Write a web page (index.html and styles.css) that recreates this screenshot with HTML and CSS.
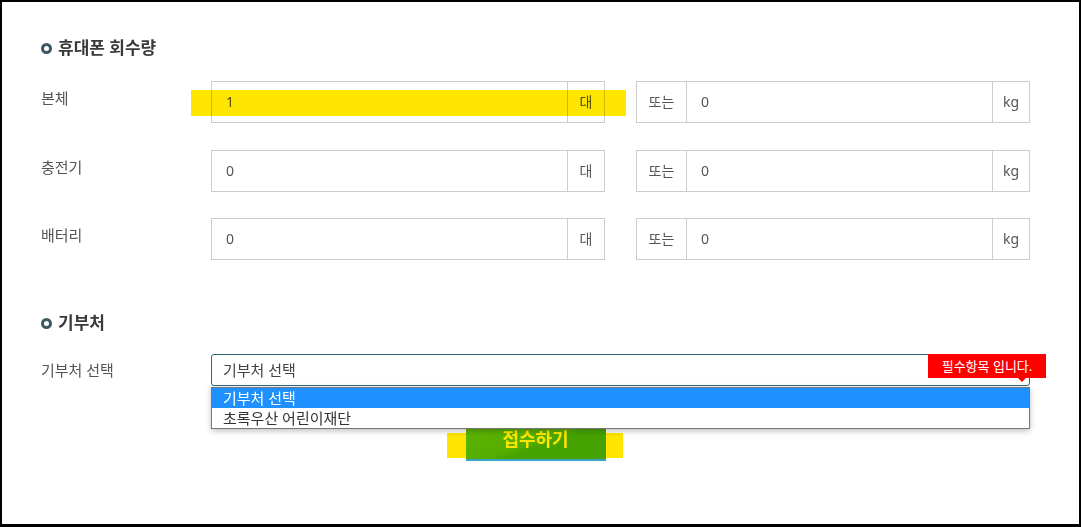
FILE: index.html
```html
<!DOCTYPE html>
<html lang="ko">
<head>
<meta charset="utf-8">
<title>휴대폰 회수 신청</title>
<link rel="stylesheet" href="styles.css">
</head>
<body>
<div class="page">
  <section class="sec">
    <h2 class="sec-title"><span class="ring"></span>휴대폰 회수량</h2>
    <div class="rows">
      <div class="row">
        <div class="label">본체</div>
        <div class="group">
          <div class="field">1</div>
          <div class="addon">대</div>
        </div>
        <div class="group">
          <div class="addon wide">또는</div>
          <div class="field">0</div>
          <div class="addon">kg</div>
        </div>
        <span class="mark mark-row"></span>
      </div>
      <div class="row">
        <div class="label">충전기</div>
        <div class="group">
          <div class="field">0</div>
          <div class="addon">대</div>
        </div>
        <div class="group">
          <div class="addon wide">또는</div>
          <div class="field">0</div>
          <div class="addon">kg</div>
        </div>
      </div>
      <div class="row">
        <div class="label">배터리</div>
        <div class="group">
          <div class="field">0</div>
          <div class="addon">대</div>
        </div>
        <div class="group">
          <div class="addon wide">또는</div>
          <div class="field">0</div>
          <div class="addon">kg</div>
        </div>
      </div>
    </div>
  </section>

  <section class="sec sec2">
    <h2 class="sec-title"><span class="ring"></span>기부처</h2>
    <div class="row select-row">
      <div class="label">기부처 선택</div>
      <div class="select-wrap">
        <div class="select">기부처 선택</div>
        <div class="tooltip">필수항목 입니다.<span class="tip-arrow"></span></div>
        <ul class="options">
          <li class="opt active">기부처 선택</li>
          <li class="opt">초록우산 어린이재단</li>
        </ul>
      </div>
    </div>
    <div class="actions">
      <div class="btn-wrap">
        <span class="mark mark-btn"></span>
        <button class="submit" type="button">접수하기</button>
      </div>
    </div>
  </section>
</div>
</body>
</html>
```

FILE: styles.css
```css
* { box-sizing: border-box; }
html, body { margin: 0; padding: 0; background: #fff; }
body {
  font-family: "Noto Sans", "Noto Sans CJK KR", sans-serif;
  color: #555;
  font-size: 14px;
}
.page {
  width: 1081px;
  height: 527px;
  border: 2px solid #000;
  border-bottom-width: 3px;
  padding: 35px 0 0 39px;
  overflow: hidden;
}
.sec-title {
  margin: 0;
  height: 22px;
  line-height: 22px;
  font-size: 17px;
  font-weight: 700;
  color: #3a3a3a;
  display: flex;
  align-items: center;
  gap: 6px;
}
.ring {
  width: 11px;
  height: 11px;
  border-radius: 50%;
  border: 3px solid #3d5664;
  display: inline-block;
}
.rows {
  margin-top: 22px;
  display: flex;
  flex-direction: column;
  gap: 26.5px;
}
.row {
  position: relative;
  display: flex;
  align-items: flex-start;
  height: 42px;
}
.label {
  width: 170px;
  padding-top: 7px;
  line-height: 20px;
  font-size: 15px;
  color: #555;
  flex: none;
}
.group {
  width: 394px;
  height: 42px;
  display: flex;
  border: 1px solid #ccc;
  flex: none;
}
.group + .group { margin-left: 31px; }
.field {
  flex: 1;
  padding-left: 14px;
  line-height: 40px;
  font-size: 14px;
  color: #555;
}
.addon {
  width: 37px;
  flex: none;
  text-align: center;
  line-height: 40px;
  font-size: 14px;
  color: #555;
  border-left: 1px solid #ccc;
}
.addon.wide {
  width: 50px;
  border-left: none;
  border-right: 1px solid #ccc;
}
.mark {
  position: absolute;
  background: #ffe600;
}
.mark-row {
  left: 150px;
  top: 9px;
  width: 435px;
  height: 26px;
  mix-blend-mode: multiply;
}
.sec2 { margin-top: 52px; }
.select-row {
  margin-top: 20px;
  height: 32px;
}
.select-row .label { padding-top: 6px; }
.select-wrap {
  position: relative;
  width: 819px;
  height: 32px;
}
.select {
  height: 32px;
  border: 1px solid #2f6676;
  border-radius: 3px;
  padding-left: 11px;
  line-height: 30px;
  font-size: 15px;
  color: #444;
}
.tooltip {
  position: absolute;
  left: 717px;
  top: 0;
  width: 118px;
  height: 24px;
  background: #ff0000;
  color: #fff;
  font-size: 13px;
  line-height: 24px;
  text-align: center;
  z-index: 3;
}
.tip-arrow {
  position: absolute;
  right: 20px;
  bottom: -4px;
  border-left: 4px solid transparent;
  border-right: 4px solid transparent;
  border-top: 4px solid #ff0000;
}
.options {
  position: absolute;
  left: 0;
  top: 33px;
  width: 819px;
  margin: 0;
  padding: 0;
  list-style: none;
  border: 1px solid #767676;
  background: #fff;
  box-shadow: 0 2px 6px rgba(0,0,0,0.25);
  z-index: 2;
}
.opt {
  height: 20px;
  line-height: 20px;
  padding-left: 11px;
  font-size: 15px;
  color: #333;
}
.opt.active {
  background: #1e90ff;
  color: #fff;
}
.actions {
  margin-top: 42px;
  width: 989px;
  display: flex;
  justify-content: center;
}
.btn-wrap {
  position: relative;
  width: 140px;
  height: 33px;
}
.mark-btn {
  left: -19px;
  top: 5px;
  width: 176px;
  height: 25px;
  z-index: 0;
}
.submit {
  position: relative;
  z-index: 1;
  display: block;
  width: 140px;
  height: 33px;
  margin: 0;
  padding: 0 0 10px;
  border: none;
  border-top: 1px solid #3a8a98;
  border-bottom: 2px solid #3aa5c4;
  background: linear-gradient(160deg, #5cb300 0%, #55ad00 45%, #46a200 55%, #46a200 100%);
  color: #ffe600;
  font-family: "Noto Sans", "Noto Sans CJK KR", sans-serif;
  font-size: 18px;
  font-weight: 700;
  line-height: 20px;
}
```
